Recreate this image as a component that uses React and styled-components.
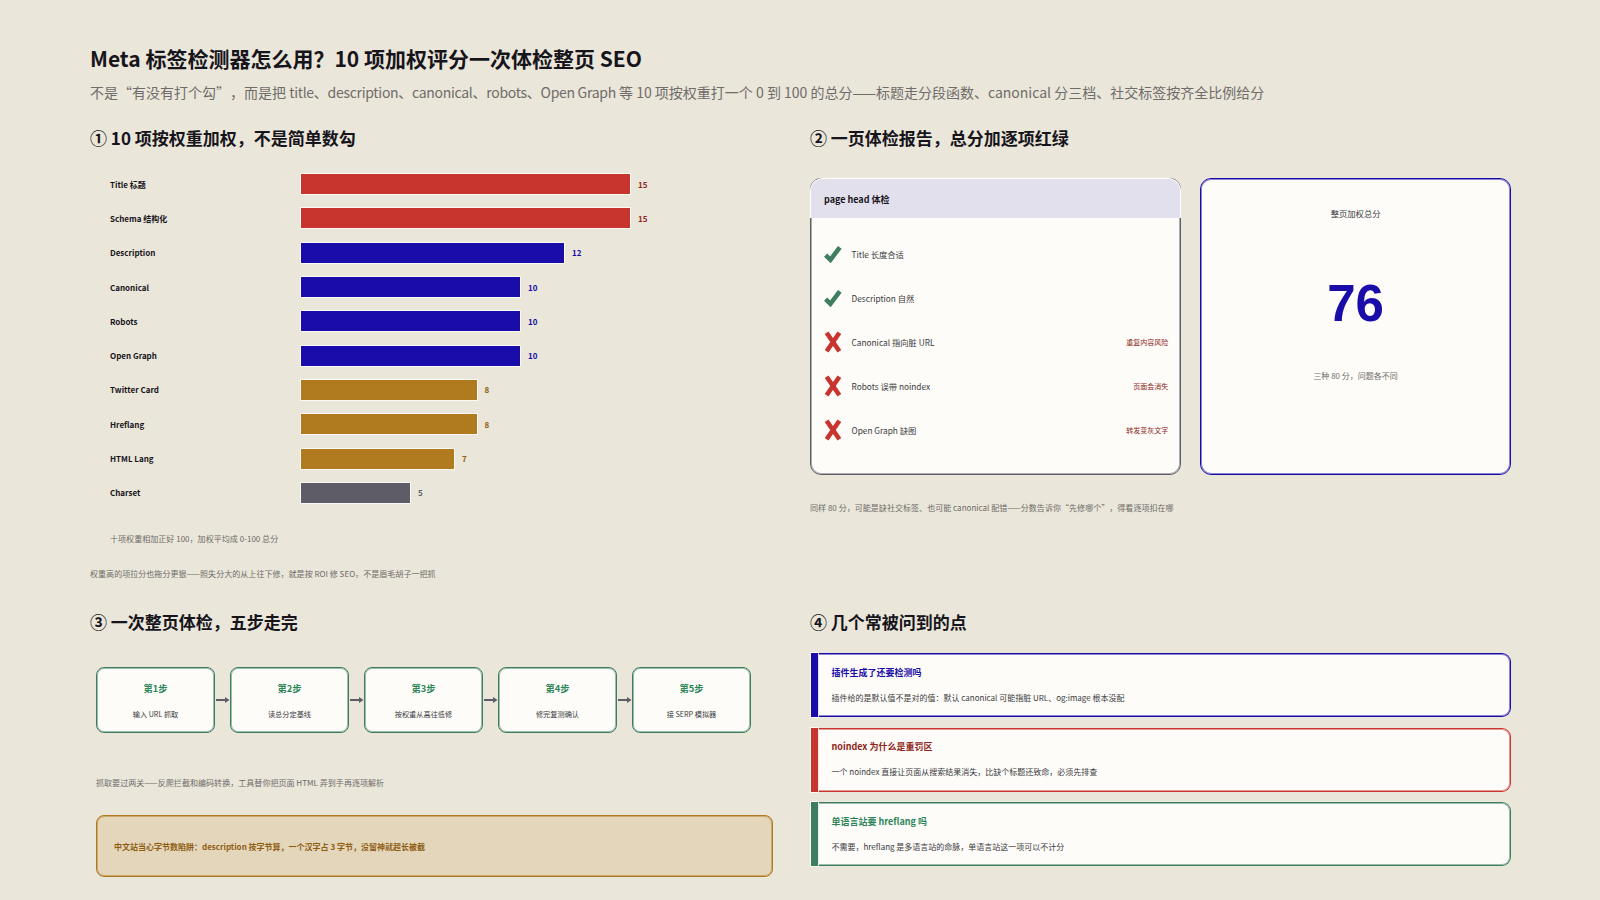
import React from "react";
import styled, { createGlobalStyle, css } from "styled-components";

const C = {
  bg: "#eae6d9", ink: "#17151c", muted: "#6f6c6a", red: "#c8352f", darkred: "#8e2420",
  navy: "#1a0ca8", amber: "#b07a1e", brown: "#8f5d12", grey: "#5e5c66", green: "#3f7d5f", deepgreen: "#2c8559",
  paper: "#fdfcf8",
};

const stroke = color => css`
  border: 1px solid ${color};
  box-shadow: inset 0 0 0 1px ${color}80;
`;

const Global = createGlobalStyle`
  html, body { margin: 0; padding: 0; background: ${C.bg}; }
  body { font-family: "Noto Sans CJK SC", "Noto Sans", sans-serif; color: ${C.ink}; text-spacing-trim: space-all; }
  * { box-sizing: border-box; }
`;

const Page = styled.main`
  width: 1600px; height: 900px; overflow: hidden; padding: 43px 90px 0;
`;
const Title = styled.h1`
  margin: 0; font-size: 21px; line-height: 30px; font-weight: 700; color: ${C.ink};
`;
const Subtitle = styled.p`
  margin: 8.5px 0 0; font-size: 14px; line-height: 20px; color: ${C.muted}; white-space: nowrap;
`;
const Tight = styled.span`letter-spacing: -0.29px;`;
const Grid = styled.div`
  display: grid; grid-template-columns: 700px 701px; grid-template-rows: 484px auto; column-gap: 20px; margin-top: 24.5px;
`;
const Section = styled.section`min-width: 0;`;
const Heading = styled.h2`
  margin: 0; font-size: 17px; line-height: 24px; font-weight: 700; color: ${C.ink};
`;
const Chart = styled.div`margin-top: 17px; padding-left: 20px;`;
const BarRow = styled.div`
  display: grid; grid-template-columns: 191px auto 1fr; align-items: center; height: 34.3px;
`;
const BarLabel = styled.span`font-size: 8px; font-weight: 700; color: ${C.ink};`;
const Bar = styled.div`
  height: 20px; background: ${p => p.$color}; box-shadow: 0 0 0 1px rgba(255,255,255,.75);
`;
const BarValue = styled.span`
  margin-left: 8px; font-size: 8px; font-weight: 700; color: ${p => p.$color};
`;
const Note = styled.p`
  margin: ${p => p.$top}px 0 0; padding-left: ${p => p.$indent || 0}px; font-size: 8.05px; line-height: 14px; color: ${C.muted}; white-space: nowrap;
`;
const NoteIndent = styled.span`display: block; padding-left: 20px;`;
const ReportRow = styled.div`display: flex; gap: 19.5px; margin-top: 27.5px; height: 297px;`;
const Report = styled.div`
  width: 371px; background: ${C.paper}; border-radius: 11px; ${stroke(C.grey)}
`;
const ReportHead = styled.div`
  height: 40.5px; margin: -1px -1px 0; padding: 2px 0 0 13px; display: flex; align-items: center;
  background: #e2e0ec; border: 1px solid #fff; border-bottom: 0; border-radius: 13px 13px 0 0;
  font-size: 9px; font-weight: 700; color: ${C.ink};
`;
const ReportList = styled.div`padding-top: 13.5px; padding-right: 11.5px;`;
const ReportItem = styled.div`
  display: flex; align-items: center; height: 44px; padding-left: 12.5px;
`;
const Mark = styled.svg`width: 18px; height: 22px; margin-right: 10px; flex: none;`;
const ItemText = styled.span`flex: 1; font-size: 8.3px; color: #3b3a40;`;
const ItemRisk = styled.span`font-size: 7px; color: ${C.darkred};`;
const Score = styled.div`
  width: 311px; background: ${C.paper}; border-radius: 11px; ${stroke(C.navy)}
  display: flex; flex-direction: column; align-items: center; padding-top: 27.5px;
`;
const ScoreLabel = styled.div`font-size: 8.3px; line-height: 14px; color: #3b3a40;`;
const ScoreValue = styled.div`
  margin-top: 54px; font-family: "Liberation Sans", Arial, sans-serif; font-size: 51px; line-height: 60px; font-weight: 700; color: ${C.navy};
`;
const ScoreNote = styled.div`margin-top: 35px; font-size: 8px; line-height: 14px; color: ${C.muted};`;
const Steps = styled.div`display: flex; align-items: center; margin-top: 33px; padding-left: 6px;`;
const Step = styled.div`
  width: 119px; height: 66px; background: ${C.paper}; border-radius: 8px; ${stroke(C.green)}
  display: flex; flex-direction: column; align-items: center; padding-top: 11.5px;
`;
const StepName = styled.div`font-size: 9.3px; line-height: 16px; font-weight: 700; color: ${C.deepgreen};`;
const StepText = styled.div`margin-top: 12px; font-size: 7.2px; line-height: 12px; color: #3b3a40;`;
const Arrow = styled.svg`width: 15px; height: 8px; flex: none;`;
const Callout = styled.div`
  margin: 25px 0 0 6px; width: 677px; height: 62px; padding-left: 17px; display: flex; align-items: center;
  background: #e4d6ba; border-radius: 8px; ${stroke(C.amber)}
  font-size: 8px; font-weight: 700; color: ${C.brown};
`;
const Faqs = styled.div`display: flex; flex-direction: column; gap: 10.5px; margin-top: 19px; padding-left: 1px;`;
const Faq = styled.div`display: flex; height: 64px;`;
const FaqBar = styled.div`
  width: 7px; flex: none; background: ${p => p.$color}; box-shadow: 0 0 0 1px rgba(255,255,255,.75); position: relative;
`;
const FaqBody = styled.div`
  flex: 1; padding: 10.5px 0 0 13.5px; background: ${C.paper}; border-radius: 0 9px 9px 0;
  ${p => stroke(p.$color)}
  border-left: 0;
`;
const FaqTitle = styled.div`font-size: 9px; line-height: 16px; font-weight: 700; color: ${p => p.$color};`;
const FaqText = styled.div`margin-top: 10px; font-size: 8px; line-height: 14px; color: #3b3a40;`;

const bars = [
  ["Title 标题", 15, 329, C.red, C.darkred], ["Schema 结构化", 15, 329, C.red, C.darkred],
  ["Description", 12, 263, C.navy, C.navy], ["Canonical", 10, 219, C.navy, C.navy],
  ["Robots", 10, 219, C.navy, C.navy], ["Open Graph", 10, 219, C.navy, C.navy],
  ["Twitter Card", 8, 175.5, C.amber, C.brown], ["Hreflang", 8, 175.5, C.amber, C.brown],
  ["HTML Lang", 7, 153, C.amber, C.brown], ["Charset", 5, 109, C.grey, C.grey],
];
const checks = [
  [true, "Title 长度合适", ""], [true, "Description 自然", ""],
  [false, "Canonical 指向脏 URL", "重复内容风险"], [false, "Robots 误带 noindex", "页面会消失"],
  [false, "Open Graph 缺图", "转发变灰文字"],
];
const steps = [
  ["第1步", "输入 URL 抓取"], ["第2步", "读总分定基线"], ["第3步", "按权重从高往低修"],
  ["第4步", "修完复测确认"], ["第5步", "接 SERP 模拟器"],
];
const faqs = [
  ["插件生成了还要检测吗", "插件给的是默认值不是对的值：默认 canonical 可能指脏 URL、og:image 根本没配", C.navy, C.navy],
  ["noindex 为什么是重罚区", "一个 noindex 直接让页面从搜索结果消失，比缺个标题还致命，必须先排查", C.red, C.darkred],
  ["单语言站要 hreflang 吗", "不需要，hreflang 是多语言站的命脉，单语言站这一项可以不计分", C.green, C.deepgreen],
];

const CheckMark = () => (
  <Mark viewBox="0 0 18 22">
    <path d="M1.6 12.2L6.4 16.8L15.8 4.4" fill="none" stroke={C.green} strokeWidth="4.6" />
  </Mark>
);
const CrossMark = () => (
  <Mark viewBox="0 0 18 22">
    <path d="M2.6 1.8L15.4 20.2M15.4 1.8L2.6 20.2" fill="none" stroke={C.red} strokeWidth="4.6" />
  </Mark>
);

export default function App() {
  return (
    <Page>
      <Global />
      <Title>Meta 标签检测器怎么用？10 项加权评分一次体检整页 SEO</Title>
      <Subtitle>不是“有没有打个勾”，而是把 <Tight>title、description、canonical、robots、Open Graph</Tight> 等 10 项按权重打一个 0 到 100 的总分——标题走分段函数、canonical 分三档、社交标签按齐全比例给分</Subtitle>
      <Grid>
        <Section>
          <Heading>① 10 项按权重加权，不是简单数勾</Heading>
          <Chart>
            {bars.map(([l, v, w, c, t]) => (
              <BarRow key={l}>
                <BarLabel>{l}</BarLabel>
                <Bar $color={c} style={{ width: w }} />
                <BarValue $color={t}>{v}</BarValue>
              </BarRow>
            ))}
          </Chart>
          <Note $top={22}>
            <NoteIndent>十项权重相加正好 100，加权平均成 0-100 总分</NoteIndent>
          </Note>
          <Note $top={21.5}>权重高的项拉分也拖分更狠——照失分大的从上往下修，就是按 ROI 修 SEO，不是眉毛胡子一把抓</Note>
        </Section>
        <Section>
          <Heading>② 一页体检报告，总分加逐项红绿</Heading>
          <ReportRow>
            <Report>
              <ReportHead>page head 体检</ReportHead>
              <ReportList>
                {checks.map(([ok, t, r]) => (
                  <ReportItem key={t}>
                    {ok ? <CheckMark /> : <CrossMark />}
                    <ItemText>{t}</ItemText>
                    <ItemRisk>{r}</ItemRisk>
                  </ReportItem>
                ))}
              </ReportList>
            </Report>
            <Score>
              <ScoreLabel>整页加权总分</ScoreLabel>
              <ScoreValue>76</ScoreValue>
              <ScoreNote>三种 80 分，问题各不同</ScoreNote>
            </Score>
          </ReportRow>
          <Note $top={26.5}>同样 80 分，可能是缺社交标签、也可能 canonical 配错——分数告诉你“先修哪个”，得看逐项扣在哪</Note>
        </Section>
        <Section>
          <Heading>③ 一次整页体检，五步走完</Heading>
          <Steps>
            {steps.map(([n, t], i) => (
              <React.Fragment key={n}>
                {i > 0 && (
                  <Arrow viewBox="0 0 15 8">
                    <path d="M1 4H10" stroke={C.grey} strokeWidth="2" />
                    <path d="M10 1L14.5 4L10 7Z" fill={C.grey} />
                  </Arrow>
                )}
                <Step>
                  <StepName>{n}</StepName>
                  <StepText>{t}</StepText>
                </Step>
              </React.Fragment>
            ))}
          </Steps>
          <Note $top={43} $indent={6}>抓取要过两关——反爬拦截和编码转换，工具替你把页面 HTML 弄到手再逐项解析</Note>
          <Callout>中文站当心字节数陷阱：description 按字节算，一个汉字占 3 字节，没留神就超长被截</Callout>
        </Section>
        <Section>
          <Heading>④ 几个常被问到的点</Heading>
          <Faqs>
            {faqs.map(([q, a, c, t]) => (
              <Faq key={q}>
                <FaqBar $color={c} />
                <FaqBody $color={c}>
                  <FaqTitle $color={t}>{q}</FaqTitle>
                  <FaqText>{a}</FaqText>
                </FaqBody>
              </Faq>
            ))}
          </Faqs>
        </Section>
      </Grid>
    </Page>
  );
}
